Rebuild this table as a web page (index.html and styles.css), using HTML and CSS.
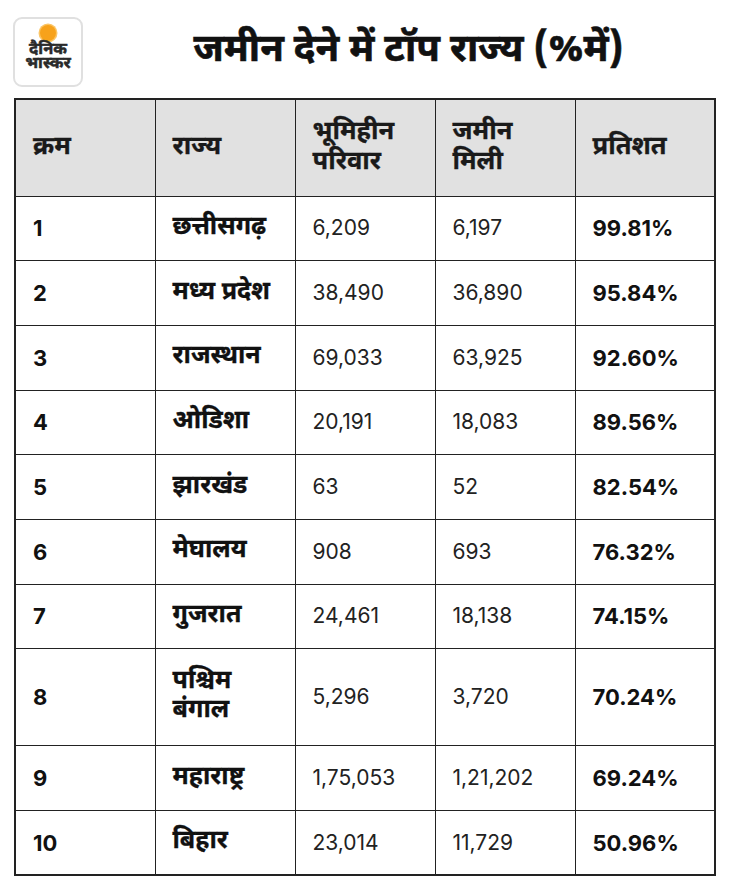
FILE: index.html
```html
<!DOCTYPE html>
<html lang="hi">
<head>
<meta charset="utf-8">
<link rel="stylesheet" href="styles.css">
</head>
<body>
<div class="page">
  <header class="head">
    <div class="logo">
      <span class="sun"></span>
      <span class="logo-text">दैनिक</span>
      <span class="logo-text">भास्कर</span>
    </div>
    <h1 class="title">जमीन देने में टॉप राज्य (%में)</h1>
  </header>
  <table class="grid">
    <thead>
      <tr><th>क्रम</th><th>राज्य</th><th>भूमिहीन<br>परिवार</th><th>जमीन<br>मिली</th><th>प्रतिशत</th></tr>
    </thead>
    <tbody>
      <tr><td class="b">1</td><td class="dv">छत्तीसगढ़</td><td>6,209</td><td>6,197</td><td class="b">99.81%</td></tr>
      <tr><td class="b">2</td><td class="dv">मध्य प्रदेश</td><td>38,490</td><td>36,890</td><td class="b">95.84%</td></tr>
      <tr><td class="b">3</td><td class="dv">राजस्थान</td><td>69,033</td><td>63,925</td><td class="b">92.60%</td></tr>
      <tr><td class="b">4</td><td class="dv">ओडिशा</td><td>20,191</td><td>18,083</td><td class="b">89.56%</td></tr>
      <tr><td class="b">5</td><td class="dv">झारखंड</td><td>63</td><td>52</td><td class="b">82.54%</td></tr>
      <tr><td class="b">6</td><td class="dv">मेघालय</td><td>908</td><td>693</td><td class="b">76.32%</td></tr>
      <tr><td class="b">7</td><td class="dv">गुजरात</td><td>24,461</td><td>18,138</td><td class="b">74.15%</td></tr>
      <tr class="tall"><td class="b">8</td><td class="dv">पश्चिम<br>बंगाल</td><td>5,296</td><td>3,720</td><td class="b">70.24%</td></tr>
      <tr><td class="b">9</td><td class="dv">महाराष्ट्र</td><td>1,75,053</td><td>1,21,202</td><td class="b">69.24%</td></tr>
      <tr><td class="b">10</td><td class="dv">बिहार</td><td>23,014</td><td>11,729</td><td class="b">50.96%</td></tr>
    </tbody>
  </table>
</div>
</body>
</html>
```

FILE: styles.css
```css
* { box-sizing: border-box; }
html, body { margin: 0; padding: 0; background: #fff; }
body {
  font-family: "Noto Sans Devanagari", "Lohit Devanagari", "Noto Sans", "Open Sans", sans-serif;
  color: #111;
}
.page { width: 730px; padding: 17px 14px 0 14px; }
.head { display: flex; align-items: center; height: 70px; margin-bottom: 11px; }
.logo {
  width: 70px; height: 70px;
  border: 2.5px solid #e0e0e0; border-radius: 9px;
  display: flex; flex-direction: column; align-items: center; justify-content: flex-start;
  padding-top: 6px; flex: none; margin-left: -1px;
}
.sun {
  width: 16px; height: 16px; border-radius: 50%;
  background: #f7a21b; box-shadow: 0 0 0 1.5px #fbc566;
  margin-bottom: 1px; flex: none;
}
.logo-text {
  display: block;
  font-size: 16.5px; font-weight: 700; line-height: 16px; height: 14px; text-align: center; color: #2a2a2a;
  letter-spacing: 0; -webkit-text-stroke: 0.5px #2a2a2a;
}
.title {
  flex: 1; margin: 0; text-align: center;
  font-size: 38.5px; font-weight: 700; color: #111;
  padding-left: 18px; line-height: 1.2;
  -webkit-text-stroke: 0.6px #111;
}
.grid {
  width: 702px; border-collapse: collapse;
  border: 2px solid #222; table-layout: fixed;
}
.grid th, .grid td {
  border: 1.5px solid #222; text-align: left; vertical-align: middle;
  padding: 0 0 0 17px;
  font-family: "Inter", "Noto Sans Devanagari", "Noto Sans", sans-serif;
  font-size: 21px; line-height: 28px; color: #1a1a1a;
}
.grid th {
  background: #e1e1e1; font-weight: 700; height: 97px;
  font-family: "Noto Sans Devanagari", "Noto Sans", sans-serif;
  font-size: 25.5px; line-height: 30px; -webkit-text-stroke: 0.3px #1a1a1a;
}
.grid td { height: 64.7px; font-weight: 400; color: #222; }
.grid td.b { font-weight: 700; color: #111; font-size: 22px; }
.grid td.dv {
  font-family: "Noto Sans Devanagari", "Noto Sans", sans-serif;
  font-weight: 700; font-size: 25px; line-height: 29px; color: #111;
  -webkit-text-stroke: 0.3px #111;
}
.grid tr.tall td { height: 97px; }
```
